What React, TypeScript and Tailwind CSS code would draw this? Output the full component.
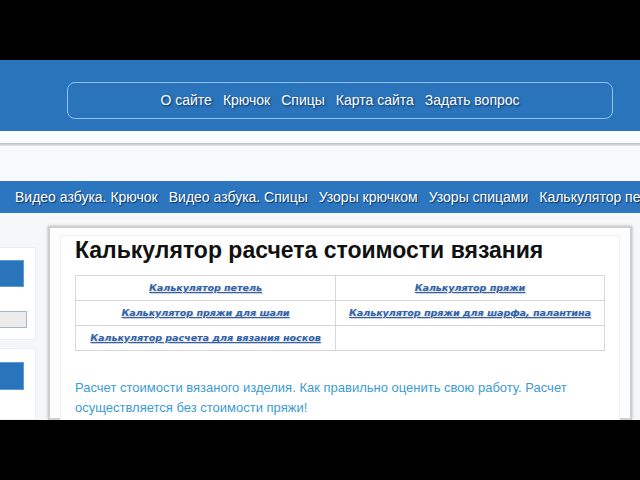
export default function App() {
  const topLinks = ['О сайте', 'Крючок', 'Спицы', 'Карта сайта', 'Задать вопрос']
  const barLinks = ['Видео азбука. Крючок', 'Видео азбука. Спицы', 'Узоры крючком', 'Узоры спицами', 'Калькулятор петель', 'Калькулятор пряжи']
  const rows = [
    ['Калькулятор петель', 'Калькулятор пряжи'],
    ['Калькулятор пряжи для шали', 'Калькулятор пряжи для шарфа, палантина'],
    ['Калькулятор расчета для вязания носков', '']
  ]

  return (
    <div className="w-[640px] h-[480px] overflow-hidden bg-black flex flex-col font-['Liberation_Sans',Arial,sans-serif]">
      <div className="h-[60px] shrink-0 bg-black" />
      {/* header */}
      <div className="h-[71px] shrink-0 bg-[#2a74bb] pt-[22px] pl-[67px] pr-[27px]">
        <div className="h-[37px] rounded-lg border border-[#8fc3ef] flex items-center justify-center gap-[11px] text-[14px] text-white [text-shadow:1px_1px_2px_#0b2f5a]">
          {topLinks.map(l => (
            <span key={l}>{l}</span>
          ))}
        </div>
      </div>
      <div className="h-[12px] shrink-0 bg-[#fbfcfd]" />
      <div className="h-[3px] shrink-0 bg-gradient-to-b from-[#bdbdbd] to-[#e6e6e6]" />
      <div className="h-[35px] shrink-0 bg-[#f8f9fc]" />
      {/* menu bar */}
      <div className="h-[32px] shrink-0 bg-[#2b76bf] flex items-center pl-[15px] gap-[11px] whitespace-nowrap overflow-hidden text-[14px] text-white [text-shadow:1px_1px_1px_#0b2f5a]">
        {barLinks.map(l => (
          <span key={l}>{l}</span>
        ))}
      </div>
      {/* content */}
      <div className="h-[207px] shrink-0 overflow-hidden bg-[#f6f7f9] flex">
        <div className="w-[36px] shrink-0 pt-[34px] flex flex-col gap-[8px]">
          <div className="h-[105px] bg-white border border-l-0 border-[#eceef1] pt-[12px]">
            <div className="w-[24px] h-[27px] bg-[#2a74bb] border border-[#5d9bd6] border-l-0" />
            <div className="mt-[24px] w-[27px] h-[17px] bg-[#ececec] border border-[#9fb7cf] border-l-0" />
          </div>
          <div className="h-[80px] bg-white border border-l-0 border-[#eceef1] pt-[13px]">
            <div className="w-[24px] h-[28px] bg-[#2a74bb] border border-[#5d9bd6] border-l-0" />
          </div>
        </div>
        <div className="ml-[12px] mt-[13px] w-[584px] shrink-0 border-2 border-[#cfcfcf] shadow-[0_0_3px_rgba(0,0,0,0.25)] bg-[#fdfdfd] pt-[7px] px-[10px]">
          <div className="border border-[#eef0f2] bg-white h-[300px] px-[14px]">
            <h1 className="mt-[1px] text-[23px] leading-[26px] font-bold text-[#111]">
              Калькулятор расчета стоимости вязания
            </h1>
            <table className="mt-[12px] w-[530px] table-fixed border-collapse text-[9.5px] font-['DejaVu_Sans',Verdana,sans-serif] font-bold italic">
              <tbody>
                {rows.map((r, i) => (
                  <tr key={i} className="h-[25px]">
                    {r.map((c, j) => (
                      <td key={j} className={`border border-[#d6d6d6] text-center p-0 whitespace-nowrap ${j === 0 ? 'w-[260px]' : ''}`}>
                        {c && (
                          <span className="underline text-[#2f63ad] [text-shadow:1px_1px_1px_rgba(0,0,0,0.18)]">{c}</span>
                        )}
                      </td>
                    ))}
                  </tr>
                ))}
              </tbody>
            </table>
            <p className="mt-[27px] text-[13px] leading-[20px] text-[#3c9bd3]">
              Расчет стоимости вязаного изделия. Как правильно оценить свою работу. Расчет осуществляется без стоимости пряжи!
            </p>
          </div>
        </div>
      </div>
      <div className="flex-1 bg-black" />
    </div>
  )
}
